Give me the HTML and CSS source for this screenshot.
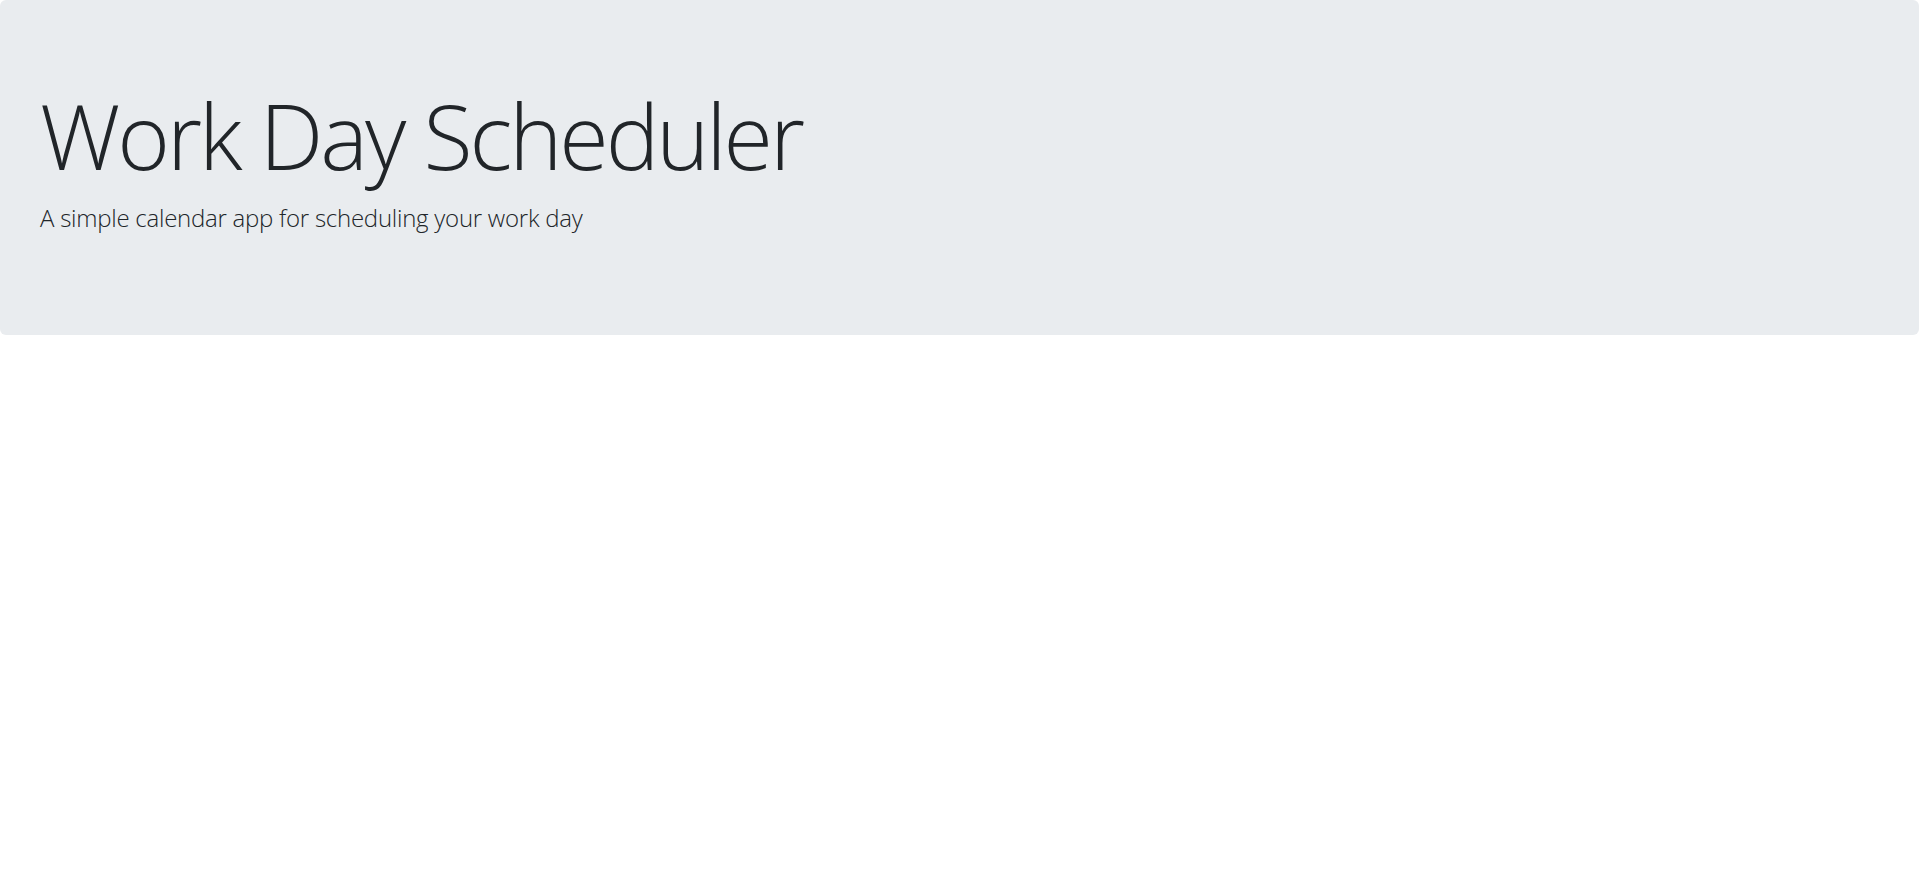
FILE: index.html
```html
<!DOCTYPE html>
<html lang="en">
<head>
<meta charset="utf-8">
<title>Work Day Scheduler</title>
<link rel="stylesheet" href="styles.css">
</head>
<body>
<header class="jumbotron">
  <h1 class="display">Work Day Scheduler</h1>
  <p class="lead">A simple calendar app for scheduling your work day</p>
</header>
<main class="container"></main>
</body>
</html>
```

FILE: styles.css
```css
html, body {
  margin: 0;
  padding: 0;
  background: #ffffff;
  color: #212529;
  font-family: "Open Sans", "Segoe UI", "Liberation Sans", sans-serif;
}

.jumbotron {
  display: flex;
  flex-direction: column;
  align-items: flex-start;
  box-sizing: border-box;
  width: 1919px;
  height: 335px;
  padding: 81px 40px 0 40px;
  background: #e9ecef;
  border-radius: 6px;
}

.display {
  margin: 0 0 11px 0;
  font-size: 90px;
  font-weight: 300;
  line-height: 1.2;
  letter-spacing: -3.05px;
}

.lead {
  margin: 0;
  font-size: 24px;
  font-weight: 300;
  line-height: 1.5;
  letter-spacing: -0.25px;
}
```
